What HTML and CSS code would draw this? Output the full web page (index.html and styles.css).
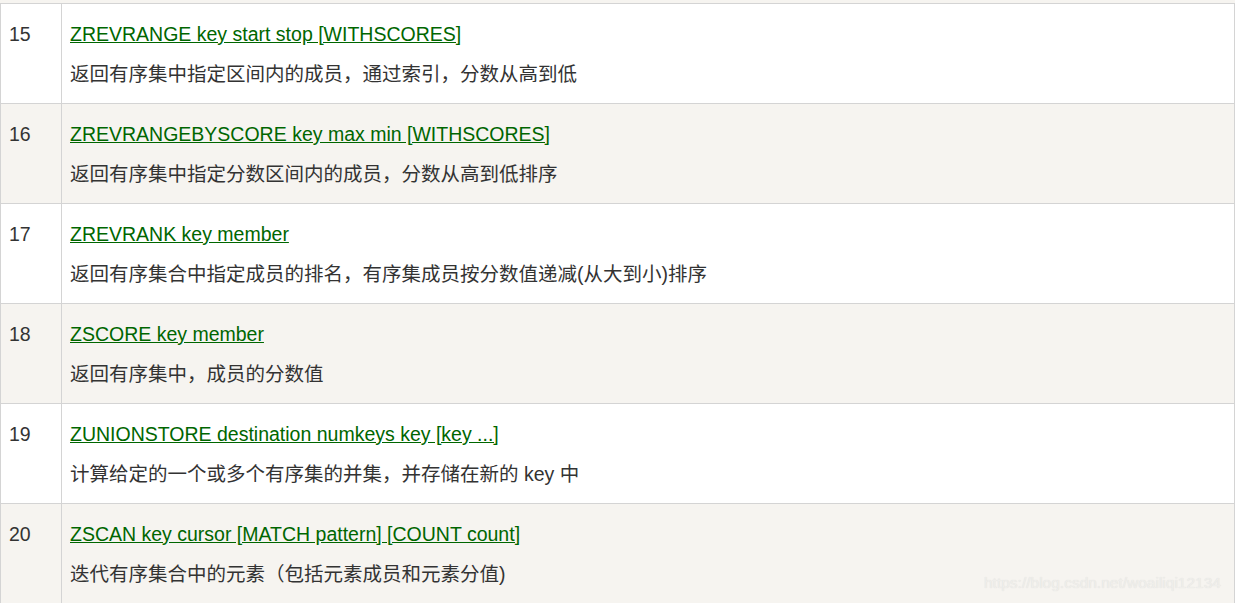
FILE: index.html
```html
<!DOCTYPE html>
<html lang="zh-CN">
<head>
  <meta charset="utf-8">
  <title>Redis 有序集合命令</title>
  <link rel="stylesheet" href="styles.css">
</head>
<body>
  <div class="prev-row"></div>
  <table class="reference">
    <tr>
      <td class="num">15</td>
      <td><a href="#">ZREVRANGE key start stop [WITHSCORES]</a><br>返回有序集中指定区间内的成员，通过索引，分数从高到低</td>
    </tr>
    <tr>
      <td class="num">16</td>
      <td><a href="#">ZREVRANGEBYSCORE key max min [WITHSCORES]</a><br>返回有序集中指定分数区间内的成员，分数从高到低排序</td>
    </tr>
    <tr>
      <td class="num">17</td>
      <td><a href="#">ZREVRANK key member</a><br>返回有序集合中指定成员的排名，有序集成员按分数值递减(从大到小)排序</td>
    </tr>
    <tr>
      <td class="num">18</td>
      <td><a href="#">ZSCORE key member</a><br>返回有序集中，成员的分数值</td>
    </tr>
    <tr>
      <td class="num">19</td>
      <td><a href="#">ZUNIONSTORE destination numkeys key [key ...]</a><br>计算给定的一个或多个有序集的并集，并存储在新的 key 中</td>
    </tr>
    <tr>
      <td class="num">20</td>
      <td><a href="#">ZSCAN key cursor [MATCH pattern] [COUNT count]</a><br>迭代有序集合中的元素（包括元素成员和元素分值)</td>
    </tr>
  </table>
  <div class="watermark">https://blog.csdn.net/woailiqi12134</div>
</body>
</html>
```

FILE: styles.css
```css
html, body {
  margin: 0;
  padding: 0;
  overflow: hidden;
  background: #fff;
}
body {
  font-family: "Liberation Sans", Arial, "Noto Sans CJK SC", sans-serif;
  font-size: 19.5px;
  color: #333;
  position: relative;
  height: 603px;
}
.prev-row {
  width: 1235px;
  height: 3px;
  background: #f6f4f0;
}
table.reference {
  width: 1235px;
  border-collapse: collapse;
  border: 1px solid #d4d4d4;
}
table.reference td {
  border: 1px solid #d4d4d4;
  padding: 11px 8px 9px;
  line-height: 39.5px;
  vertical-align: top;
  height: 79px;
  box-sizing: content-box;
}
table.reference td.num {
  width: 44px;
}
table.reference tr:nth-child(even) {
  background: #f6f4f0;
}
table.reference a {
  color: #006600;
}
.watermark {
  position: absolute;
  left: 984px;
  top: 573px;
  font-size: 15.5px;
  color: #efeeeb;
  text-shadow: 0 0 1px #dcdbd8;
  line-height: 20px;
}
```
